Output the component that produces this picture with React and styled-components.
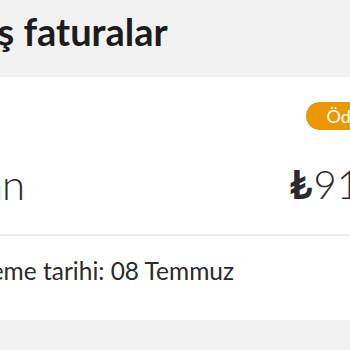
import styled, { createGlobalStyle } from "styled-components";

const GlobalStyle = createGlobalStyle`
  html, body {
    margin: 0;
    padding: 0;
    background: #f2f2f2;
    overflow: hidden;
  }
  body {
    font-family: Lato, "DejaVu Sans", sans-serif;
    color: #333333;
  }
`;

const Screen = styled.div`
  width: 600px;
  margin-left: -130px;
  padding-top: 8px;
`;

const Title = styled.h1`
  margin: 0;
  padding-left: 20px;
  font-size: 38px;
  line-height: 46px;
  font-weight: 700;
  color: #1c1c1c;
`;

const Card = styled.div`
  margin-top: 23px;
  width: 560px;
  background: #ffffff;
  box-shadow: 0 2px 4px rgba(0, 0, 0, 0.16);
`;

const Top = styled.div`
  display: flex;
  justify-content: space-between;
  align-items: flex-end;
  padding: 25px 15px 30px 24px;
  border-bottom: 2px solid #ebebeb;
`;

const Month = styled.div`
  font-size: 42px;
  line-height: 40px;
  font-weight: 300;
  letter-spacing: -1px;
  color: #2b2b2b;
`;

const Side = styled.div`
  display: flex;
  flex-direction: column;
  align-items: flex-end;
  gap: 34px;
`;

const Badge = styled.span`
  display: inline-flex;
  align-items: center;
  height: 28px;
  padding: 0 6px 0 20px;
  border-radius: 14px;
  background: #eb9700;
  color: #ffffff;
  font-size: 18px;
`;

const Amount = styled.div`
  font-size: 40px;
  line-height: 40px;
  font-weight: 300;
  color: #2b2b2b;
`;

const Lira = styled.span`
  font-weight: 700;
  margin-right: 1px;
`;

const Bottom = styled.div`
  box-sizing: border-box;
  height: 84px;
  padding: 21px 0 0 46px;
  font-size: 24.5px;
  line-height: 28px;
  color: #2b2b2b;
`;

export default function App() {
  return (
    <>
      <GlobalStyle />
      <Screen>
        <Title>Geçmiş faturalar</Title>
        <Card>
          <Top>
            <Month>Haziran</Month>
            <Side>
              <Badge>Ödenmedi</Badge>
              <Amount>
                <Lira>₺</Lira>91,50
              </Amount>
            </Side>
          </Top>
          <Bottom>Son ödeme tarihi: 08 Temmuz</Bottom>
        </Card>
      </Screen>
    </>
  );
}
